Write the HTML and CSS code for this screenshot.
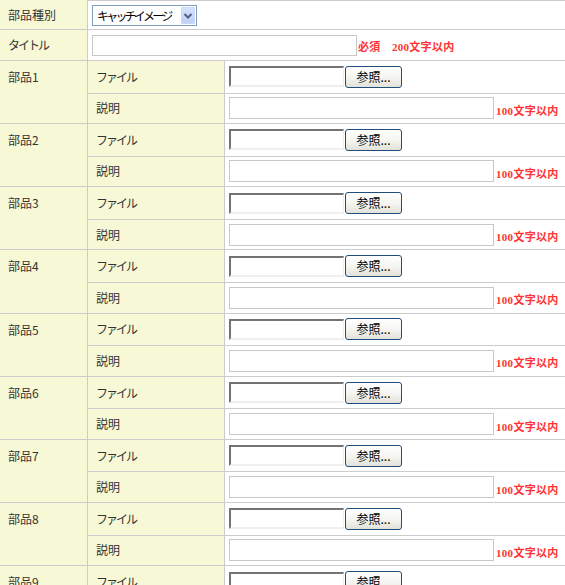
FILE: index.html
```html
<!DOCTYPE html>
<html lang="ja">
<head>
<meta charset="utf-8">
<title>部品登録</title>
<link rel="stylesheet" href="styles.css">
</head>
<body>
<div class="form">
  <div class="label">部品種別</div>
  <div class="value wide first">
    <div class="select"><span class="select-text">キャッチイメージ</span><span class="select-arrow"><svg width="14" height="17" viewBox="0 0 14 17"><polyline points="3.5,7 7,10.5 10.5,7" fill="none" stroke="#4d6185" stroke-width="2"/></svg></span></div>
  </div>
  <div class="label kana">タイトル</div>
  <div class="value wide">
    <input class="text title" type="text"><span class="note note-title">必須　200文字以内</span>
  </div>

  <div class="label group">部品1</div>
  <div class="label kana">ファイル</div>
  <div class="value"><input class="file" type="text"><button class="browse" type="button">参照...</button></div>
  <div class="label">説明</div>
  <div class="value"><input class="text desc" type="text"><span class="note">100文字以内</span></div>

  <div class="label group">部品2</div>
  <div class="label kana">ファイル</div>
  <div class="value"><input class="file" type="text"><button class="browse" type="button">参照...</button></div>
  <div class="label">説明</div>
  <div class="value"><input class="text desc" type="text"><span class="note">100文字以内</span></div>

  <div class="label group">部品3</div>
  <div class="label kana">ファイル</div>
  <div class="value"><input class="file" type="text"><button class="browse" type="button">参照...</button></div>
  <div class="label">説明</div>
  <div class="value"><input class="text desc" type="text"><span class="note">100文字以内</span></div>

  <div class="label group">部品4</div>
  <div class="label kana">ファイル</div>
  <div class="value"><input class="file" type="text"><button class="browse" type="button">参照...</button></div>
  <div class="label">説明</div>
  <div class="value"><input class="text desc" type="text"><span class="note">100文字以内</span></div>

  <div class="label group">部品5</div>
  <div class="label kana">ファイル</div>
  <div class="value"><input class="file" type="text"><button class="browse" type="button">参照...</button></div>
  <div class="label">説明</div>
  <div class="value"><input class="text desc" type="text"><span class="note">100文字以内</span></div>

  <div class="label group">部品6</div>
  <div class="label kana">ファイル</div>
  <div class="value"><input class="file" type="text"><button class="browse" type="button">参照...</button></div>
  <div class="label">説明</div>
  <div class="value"><input class="text desc" type="text"><span class="note">100文字以内</span></div>

  <div class="label group">部品7</div>
  <div class="label kana">ファイル</div>
  <div class="value"><input class="file" type="text"><button class="browse" type="button">参照...</button></div>
  <div class="label">説明</div>
  <div class="value"><input class="text desc" type="text"><span class="note">100文字以内</span></div>

  <div class="label group">部品8</div>
  <div class="label kana">ファイル</div>
  <div class="value"><input class="file" type="text"><button class="browse" type="button">参照...</button></div>
  <div class="label">説明</div>
  <div class="value"><input class="text desc" type="text"><span class="note">100文字以内</span></div>

  <div class="label group">部品9</div>
  <div class="label kana">ファイル</div>
  <div class="value"><input class="file" type="text"><button class="browse" type="button">参照...</button></div>
  <div class="label">説明</div>
  <div class="value"><input class="text desc" type="text"><span class="note">100文字以内</span></div>
</div>
</body>
</html>
```
FILE: styles.css
```css
html, body {
  margin: 0;
  padding: 0;
  overflow: hidden;
  background: #fff;
}

body {
  font-family: "Noto Sans CJK JP", "Noto Sans", sans-serif;
  font-size: 12px;
  color: #333;
}

.form {
  display: grid;
  grid-template-columns: 87px 136px 1fr;
  grid-template-rows: 29px 30px repeat(9, 31.5px 29.67px);
  gap: 1px;
  background: #cccccc;
  width: 565px;
}

.label {
  background: #f7f8d6;
  padding-left: 8px;
  display: flex;
  align-items: center;
  line-height: 16px;
  white-space: nowrap;
}

.label.kana {
  letter-spacing: -2px;
}

.label.group {
  grid-row: span 2;
  align-items: flex-start;
  padding-top: 8px;
}

.value {
  background: #fff;
  padding-left: 4px;
  display: flex;
  align-items: center;
  white-space: nowrap;
}

.value.wide {
  grid-column: span 2;
}

.value.first {
  box-sizing: border-box;
  border-top: 1px solid #cccccc;
}

/* select box */
.select {
  box-sizing: border-box;
  width: 105px;
  height: 21px;
  border: 1px solid #7f9db9;
  padding: 1px;
  display: flex;
  align-items: center;
  background: #fff;
  margin-top: 1px;
}

.select-text {
  flex: 1;
  min-width: 0;
  overflow: hidden;
  padding-left: 3px;
  color: #000;
  font-size: 12px;
  letter-spacing: -2.8px;
  line-height: 17px;
}

.select-arrow {
  flex: none;
  box-sizing: border-box;
  width: 14px;
  height: 17px;
  border: 1px solid #c9d7f8;
  border-radius: 1px;
  background: linear-gradient(#d6e1fb, #c0cff5);
  display: flex;
}

.select-arrow svg {
  margin: -1px;
}

/* text inputs */
.text {
  box-sizing: border-box;
  height: 21px;
  border: 1px solid #c8c8c8;
  padding: 0 2px;
  margin: 0;
  font: inherit;
  background: #fff;
}

.title {
  width: 265px;
  margin-top: 1px;
}

.desc {
  width: 265px;
  height: 22px;
}

/* file input imitation */
.file {
  box-sizing: border-box;
  width: 115px;
  height: 21px;
  margin: 0;
  padding: 0 2px;
  border-top: 2px solid #737373;
  border-left: 2px solid #737373;
  border-bottom: 2px solid #efefef;
  border-right: 1px solid #efefef;
  font: inherit;
  background: #fff;
}

.browse {
  box-sizing: border-box;
  width: 57px;
  height: 22px;
  margin: 0 0 0 1px;
  padding: 0;
  border: 1px solid #1f4e7c;
  border-radius: 3px;
  background: linear-gradient(#ffffff, #f4f4f0 55%, #e2e1da);
  font-family: "Noto Sans CJK JP", sans-serif;
  font-size: 12px;
  color: #000;
  line-height: 18px;
}

/* red notes */
.note {
  color: #ff3333;
  font-family: "Liberation Serif", "Noto Sans CJK JP", serif;
  font-weight: bold;
  font-size: 11px;
  letter-spacing: 0.3px;
  margin-left: 2px;
  margin-top: 3px;
}

.note-title {
  margin-left: 1px;
  margin-top: 1px;
}
```
